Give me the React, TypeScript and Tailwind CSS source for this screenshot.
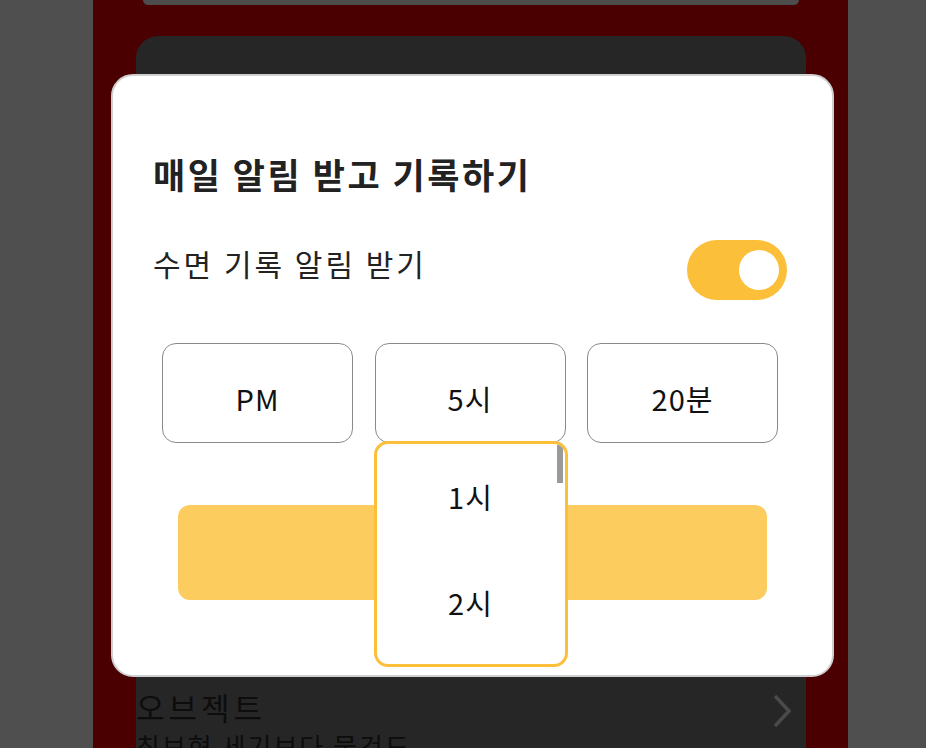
import { useState } from "react";

const font = { fontFamily: '"Noto Sans CJK KR", "Noto Sans", sans-serif' };

const TimeBox = ({ label }: { label: string }) => (
  <div className="flex h-[100px] w-[191px] items-center justify-center rounded-[14px] border border-[#8a8a8a] bg-white pt-[11px] text-[29px] tracking-[1px] text-[#111]">
    {label}
  </div>
);

const App = () => {
  const [on, setOn] = useState(true);

  return (
    <div className="relative h-[748px] w-full overflow-hidden bg-[#4f4f4f]" style={font}>
      {/* page behind the overlay */}
      <div className="ml-[93px] flex h-full w-[755px] flex-col bg-[#4a0000] pl-[43px] pr-[42px]">
        <div className="mx-[7px] h-[5px] shrink-0 rounded-b-[16px] bg-[#4d4d4d]" />
        <div className="mt-[31px] flex flex-1 flex-col rounded-t-[22px] bg-[#262626]">
          <div className="mt-[650px] flex items-center justify-between pr-[14px]">
            <span className="text-[31px] leading-[40px] tracking-[4px] text-[#0d0d0d]">오브젝트</span>
            <svg width="20" height="34" viewBox="0 0 20 34" fill="none" className="mt-[8px]">
              <path d="M3 2 L17 17 L3 32" stroke="#4a4a4a" strokeWidth="3.5" />
            </svg>
          </div>
          <span className="mt-[2px] text-[26px] leading-[32px] tracking-[2px] text-[#0d0d0d]">최보현 세기보다 물건도</span>
        </div>
      </div>

      {/* modal */}
      <div className="absolute left-[111px] top-[74px] h-[603px] w-[723px] rounded-[22px] border-2 border-[#cfcfcf] bg-white">
        <div className="flex flex-col px-[40px] pt-[74px]">
          <h2 className="text-[35px] font-bold leading-[48px] tracking-[2.5px] text-[#222]">매일 알림 받고 기록하기</h2>
          <div className="mt-[34px] flex items-center justify-between">
            <span className="pb-[6px] text-[30px] leading-[40px] tracking-[3px] text-[#222]">수면 기록 알림 받기</span>
            <button
              onClick={() => setOn(!on)}
              className={`mr-[5px] mt-[8px] flex h-[60px] w-[100px] items-center rounded-full px-[8px] ${on ? "justify-end bg-[#fbbf3a]" : "justify-start bg-[#ccc]"}`}
            >
              <span className="h-[40px] w-[40px] rounded-full bg-white" />
            </button>
          </div>

          <div className="mt-[43px] flex justify-between pl-[9px] pr-[14px]">
            <TimeBox label="PM" />
            <div className="relative">
              <TimeBox label="5시" />
              <div className="absolute left-[-1px] top-[98px] z-10 h-[226px] w-[194px] overflow-hidden rounded-[14px] border-[3px] border-[#fbbf3a] bg-white">
                <div className="absolute right-[2px] top-[1px] h-[38px] w-[6px] bg-[#9a9a9a]" />
                <div className="flex flex-col items-center pt-[26px] text-[29px] tracking-[1px] text-[#111]">
                  <span className="leading-[52px]">1시</span>
                  <span className="mt-[54px] leading-[52px]">2시</span>
                </div>
              </div>
            </div>
            <TimeBox label="20분" />
          </div>

          <button className="mx-[25px] mt-[62px] h-[95px] rounded-[12px] bg-[#fccd5e]" />
        </div>
      </div>
    </div>
  );
};

export default App;
